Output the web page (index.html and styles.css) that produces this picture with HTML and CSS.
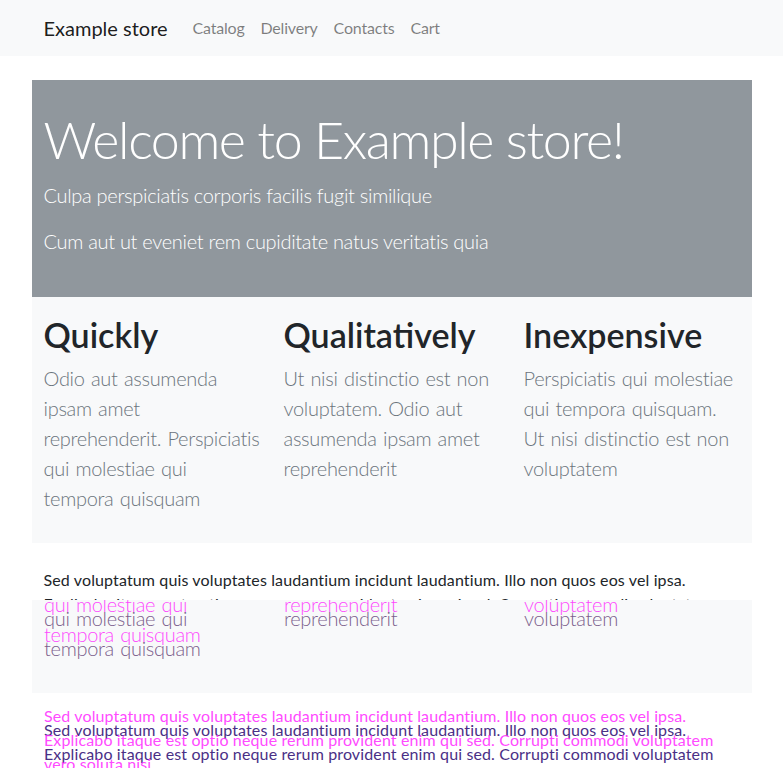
FILE: index.html
```html
<!DOCTYPE html>
<html lang="en">
<head>
<meta charset="utf-8">
<title>Example store</title>
<link rel="stylesheet" href="styles.css">
</head>
<body>
<nav class="navbar">
  <div class="container nav-inner">
    <a class="brand" href="#">Example store</a>
    <ul class="nav-links">
      <li><a href="#">Catalog</a></li>
      <li><a href="#">Delivery</a></li>
      <li><a href="#">Contacts</a></li>
      <li><a href="#">Cart</a></li>
    </ul>
  </div>
</nav>
<main class="container">
  <section class="jumbotron">
    <h1 class="display">Welcome to Example store!</h1>
    <p class="lead">Culpa perspiciatis corporis facilis fugit similique</p>
    <p class="lead">Cum aut ut eveniet rem cupiditate natus veritatis quia</p>
  </section>
  <section class="features">
    <div class="feature">
      <h2>Quickly</h2>
      <p class="lead muted">Odio aut assumenda ipsam amet reprehenderit. Perspiciatis qui molestiae qui tempora quisquam</p>
    </div>
    <div class="feature">
      <h2>Qualitatively</h2>
      <p class="lead muted">Ut nisi distinctio est non voluptatem. Odio aut assumenda ipsam amet reprehenderit</p>
    </div>
    <div class="feature">
      <h2>Inexpensive</h2>
      <p class="lead muted">Perspiciatis qui molestiae qui tempora quisquam. Ut nisi distinctio est non voluptatem</p>
    </div>
  </section>
  <p class="body-text">Sed voluptatum quis voluptates laudantium incidunt laudantium. Illo non quos eos vel ipsa. Explicabo itaque est optio neque rerum provident enim qui sed. Corrupti commodi voluptatem vero soluta nisi.</p>
</main>

<div class="glitch" aria-hidden="true">
  <div class="glitch-layer">
    <section class="features glitch-features">
      <div class="feature"><h2>Quickly</h2><p class="lead muted">Odio aut assumenda ipsam amet reprehenderit. Perspiciatis qui molestiae qui tempora quisquam</p></div>
      <div class="feature"><h2>Qualitatively</h2><p class="lead muted">Ut nisi distinctio est non voluptatem. Odio aut assumenda ipsam amet reprehenderit</p></div>
      <div class="feature"><h2>Inexpensive</h2><p class="lead muted">Perspiciatis qui molestiae qui tempora quisquam. Ut nisi distinctio est non voluptatem</p></div>
    </section>
    <p class="body-text">Sed voluptatum quis voluptates laudantium incidunt laudantium. Illo non quos eos vel ipsa. Explicabo itaque est optio neque rerum provident enim qui sed. Corrupti commodi voluptatem vero soluta nisi.</p>
  </div>
  <div class="glitch-layer ghost">
    <section class="features glitch-features">
      <div class="feature"><h2>Quickly</h2><p class="lead muted">Odio aut assumenda ipsam amet reprehenderit. Perspiciatis qui molestiae qui tempora quisquam</p></div>
      <div class="feature"><h2>Qualitatively</h2><p class="lead muted">Ut nisi distinctio est non voluptatem. Odio aut assumenda ipsam amet reprehenderit</p></div>
      <div class="feature"><h2>Inexpensive</h2><p class="lead muted">Perspiciatis qui molestiae qui tempora quisquam. Ut nisi distinctio est non voluptatem</p></div>
    </section>
    <p class="body-text">Sed voluptatum quis voluptates laudantium incidunt laudantium. Illo non quos eos vel ipsa. Explicabo itaque est optio neque rerum provident enim qui sed. Corrupti commodi voluptatem vero soluta nisi.</p>
  </div>
</div>
</body>
</html>
```
FILE: styles.css
```css
* { box-sizing: border-box; }
html, body { margin: 0; padding: 0; }
body {
  font-family: Lato, "Open Sans", sans-serif;
  font-size: 16px;
  line-height: 1.5;
  color: #212529;
  background: #fff;
  overflow: hidden;
  height: 768px;
  position: relative;
}
.container {
  width: 720px;
  margin: 0 auto;
}
.navbar {
  background: #f8f9fa;
  height: 56px;
}
.nav-inner {
  display: flex;
  align-items: center;
  height: 56px;
  padding: 0 12px;
}
.brand {
  font-size: 20px;
  color: rgba(0,0,0,.9);
  text-decoration: none;
  margin-right: 17px;
}
.nav-links {
  list-style: none;
  display: flex;
  margin: 0;
  padding: 0;
}
.nav-links a {
  display: block;
  padding: 0 8px;
  color: rgba(0,0,0,.5);
  text-decoration: none;
  letter-spacing: -0.2px;
}
.jumbotron {
  margin-top: 24px;
  background: #90979d;
  color: #fff;
  padding: 28px 12px 25px;
}
.display {
  font-size: 52px;
  font-weight: 300;
  letter-spacing: -1.4px;
  line-height: 1.2;
  margin: 0 0 10px;
}
.lead {
  font-size: 20px;
  font-weight: 300;
  line-height: 1.5;
  letter-spacing: -0.3px;
  margin: 0 0 16px;
}
.features {
  background: #f8f9fa;
  display: grid;
  grid-template-columns: repeat(3, 240px);
  padding: 18px 0 14px;
}
.feature { padding: 0 12px; }
.feature h2 {
  font-size: 34px;
  font-weight: 600;
  line-height: 1.2;
  margin: 0 0 7px;
}
.feature .lead { word-spacing: 1.2px; }
.muted { color: #6c757d; }
.body-text {
  margin: 25px 0 16px;
  padding: 0 12px;
  letter-spacing: 0.13px;
}
.glitch {
  position: absolute;
  left: 0;
  right: 0;
  top: 600px;
  bottom: 0;
  overflow: hidden;
}
.glitch-layer {
  position: absolute;
  left: 32px;
  width: 720px;
  top: -153px;
}
.glitch-layer .muted { color: #7b5f8c; }
.glitch-layer .body-text { color: #4a2f86; }
.ghost { top: -167px; }
.ghost .features { background: transparent; }
.ghost h2, .ghost .muted, .ghost .body-text { color: #ff2bff; opacity: .85; }
```
